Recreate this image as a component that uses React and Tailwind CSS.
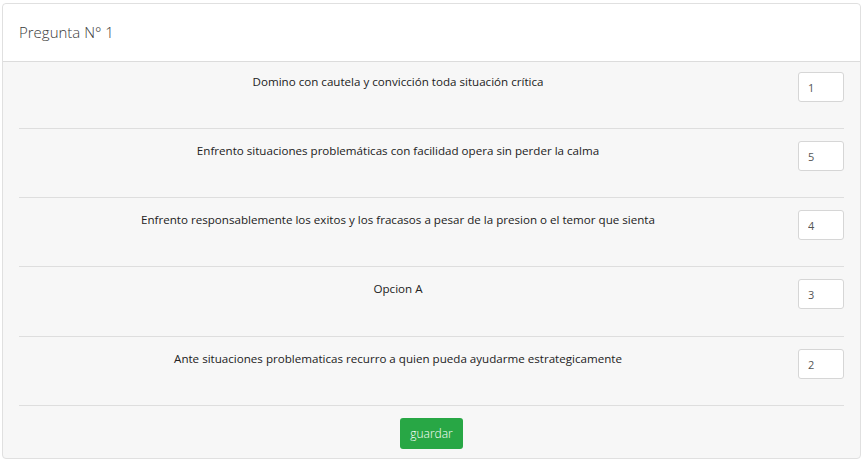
import React, { useState } from 'react';

const preguntas = [
  { id: 1, texto: 'Domino con cautela y convicción toda situación crítica', valor: '1' },
  { id: 2, texto: 'Enfrento situaciones problemáticas con facilidad opera sin perder la calma', valor: '5' },
  { id: 3, texto: 'Enfrento responsablemente los exitos y los fracasos a pesar de la presion o el temor que sienta', valor: '4' },
  { id: 4, texto: 'Opcion A', valor: '3' },
  { id: 5, texto: 'Ante situaciones problematicas recurro a quien pueda ayudarme estrategicamente', valor: '2' },
];

function App() {
  const [valores, setValores] = useState(preguntas.map(p => p.valor));

  const handleChange = (i, v) => {
    setValores(prev => prev.map((x, j) => (j === i ? v : x)));
  };

  return (
    <div
      className="w-full h-[461px] bg-white pt-[3px] pl-[2px] pr-[3px]"
      style={{ fontFamily: '"Open Sans", "Noto Sans", sans-serif' }}
    >
      <div className="border border-[#e0e0e0] rounded-[4px] bg-[#f7f7f7] h-[456px] flex flex-col">
        {/* header */}
        <div className="h-[58px] bg-white border-b border-[#dcdcdc] rounded-t-[4px] flex items-center px-4">
          <h2 className="text-[15px] text-[#3a3a3a] font-light">Pregunta N° 1</h2>
        </div>

        <div className="px-4">
          {preguntas.map((p, i) => (
            <div
              key={p.id}
              className={
                i === 0
                  ? 'flex pt-[10px] pb-[26px] border-b border-[#dedede] h-[67px]'
                  : i === 3
                  ? 'flex pt-3 pb-[26px] border-b border-[#dedede] h-[70px]'
                  : 'flex pt-3 pb-[26px] border-b border-[#dedede] h-[69px]'
              }
            >
              <div className="w-[758px] px-[15px] text-center text-[11.6px] text-[#222] leading-[16px] pt-[2px]">
                {p.texto}
              </div>
              <div className="flex-1 flex justify-end">
                <input
                  type="text"
                  value={valores[i]}
                  onChange={e => handleChange(i, e.target.value)}
                  className="w-[46px] h-[30px] bg-white border border-[#d6d6d6] rounded-[3px] px-[9px] text-[11px] text-[#555] focus:outline-none"
                />
              </div>
            </div>
          ))}
        </div>

        <div className="flex justify-center pt-3">
          <button
            type="submit"
            className="w-[63px] h-[31px] bg-[#28a745] text-white text-[12px] font-light rounded-[3px]"
          >
            guardar
          </button>
        </div>
      </div>
    </div>
  );
}

export default App;
